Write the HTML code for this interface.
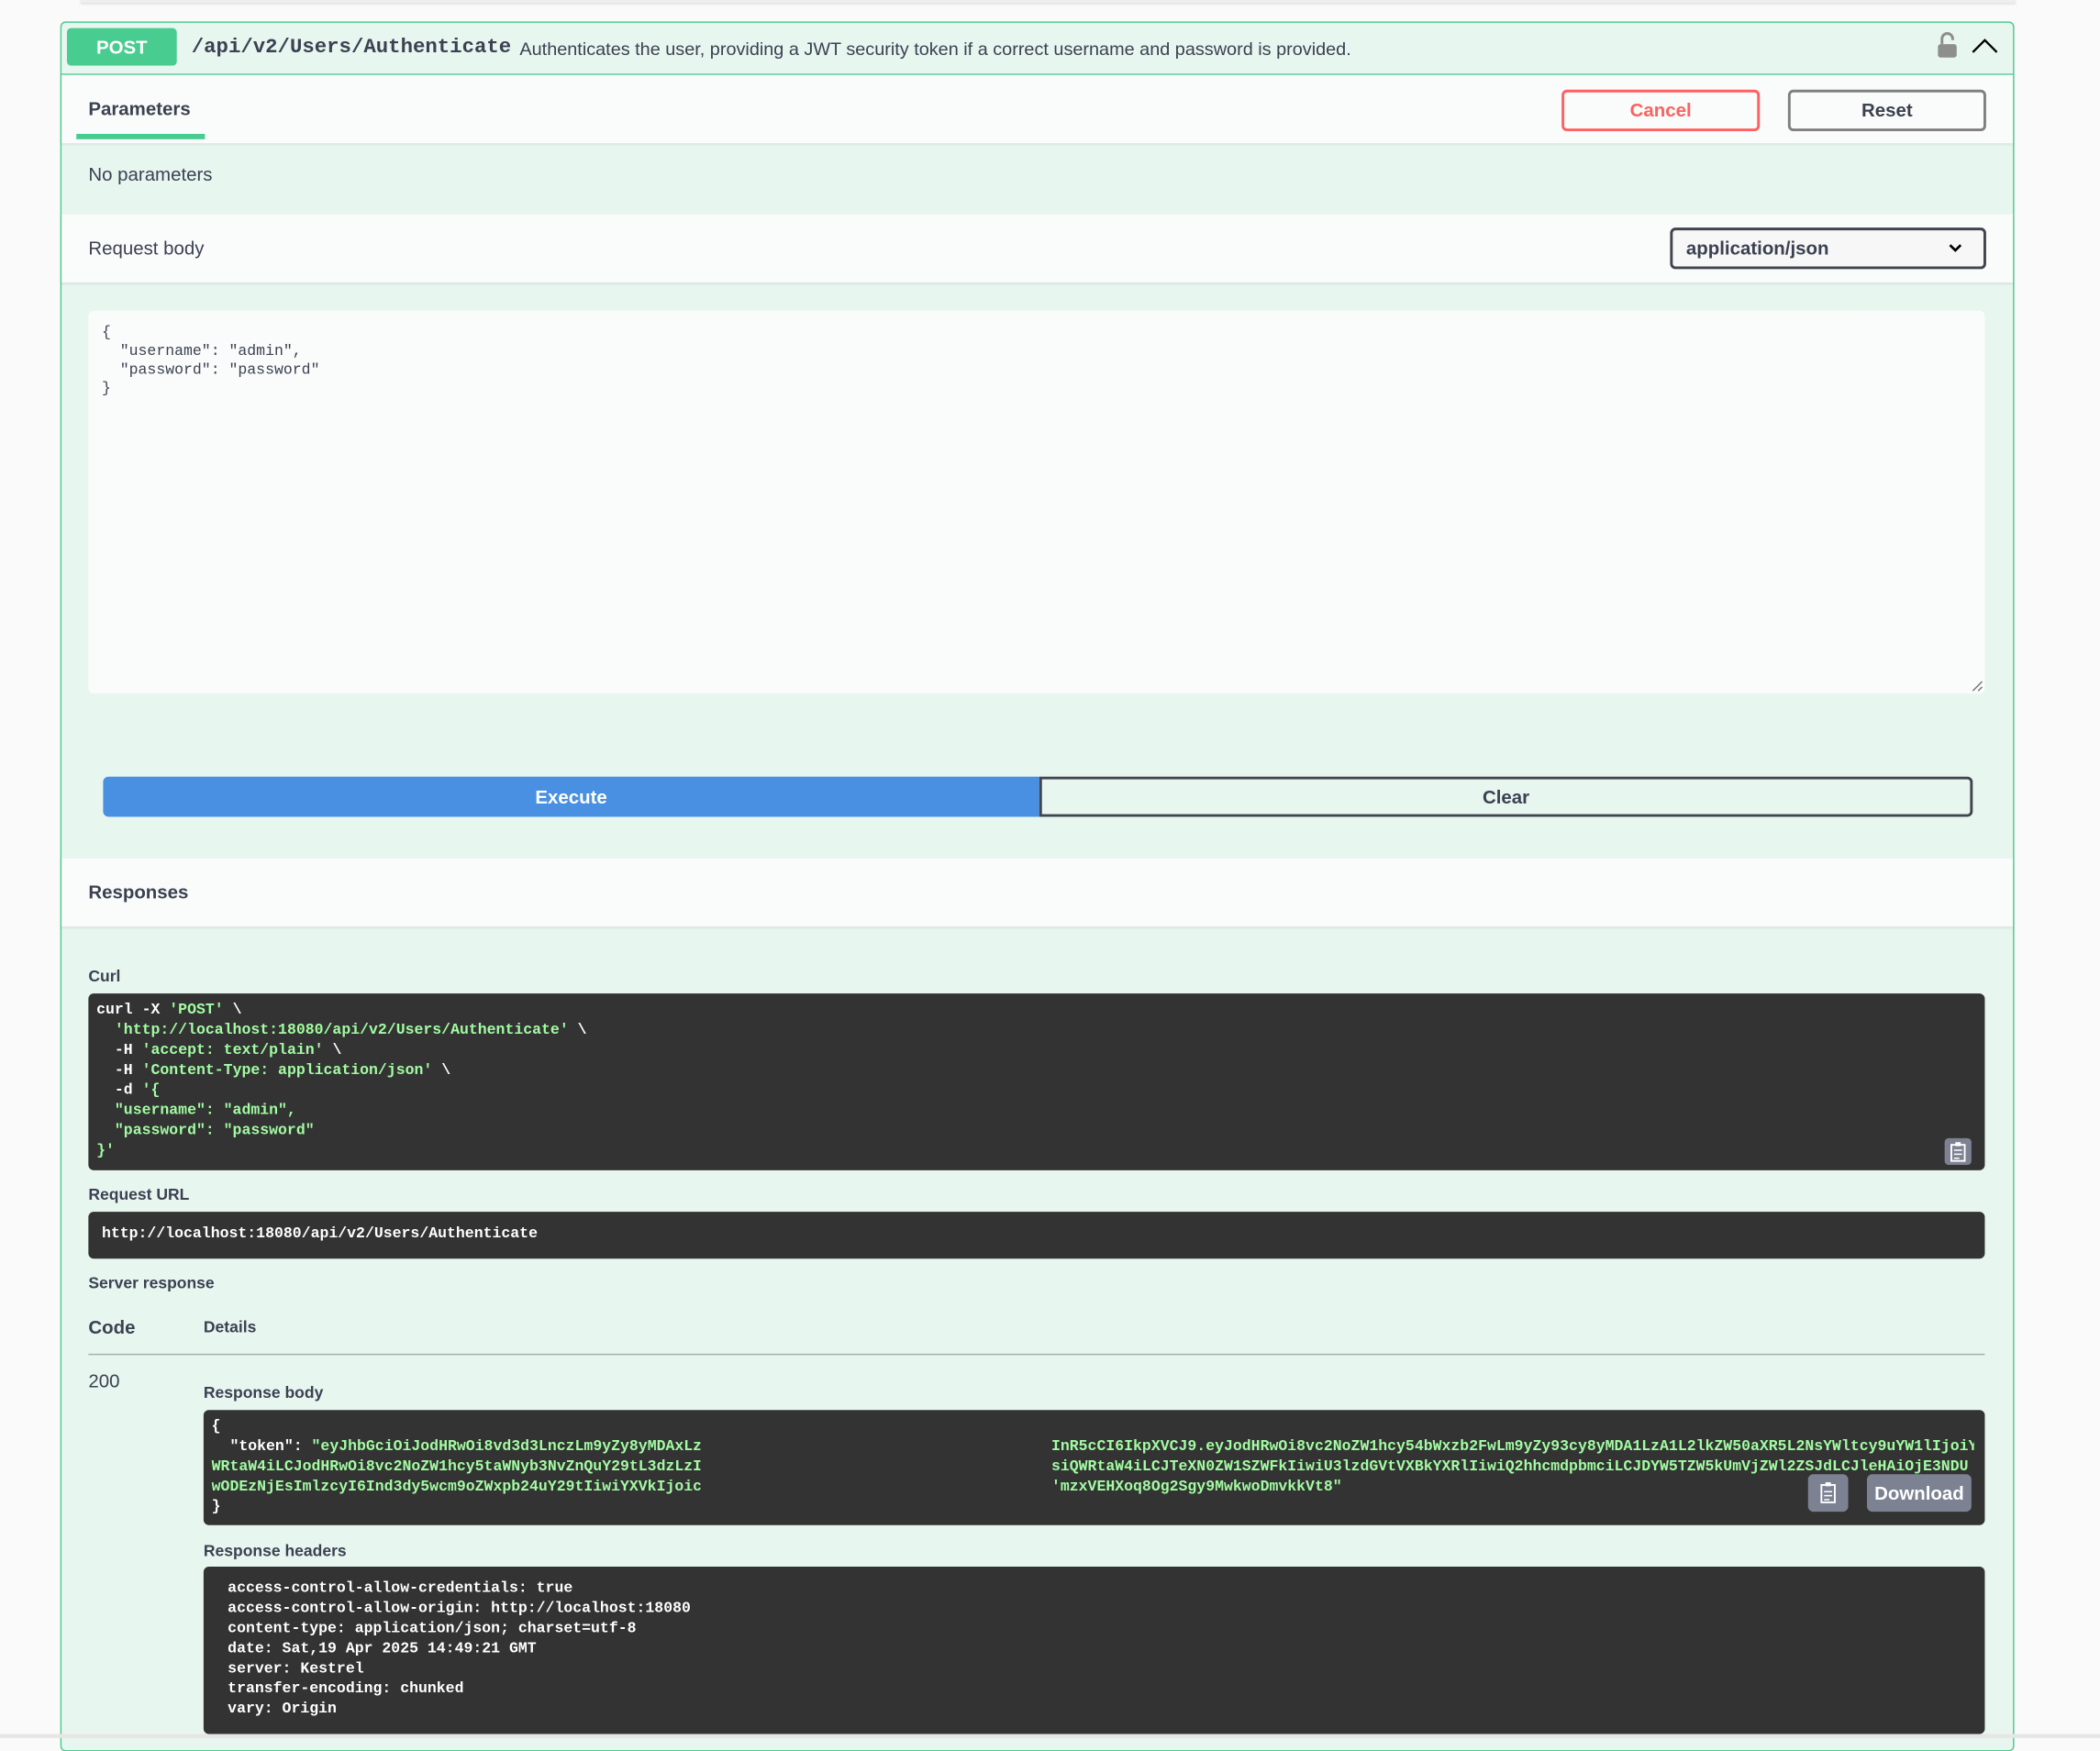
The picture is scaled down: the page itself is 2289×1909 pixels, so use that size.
<!DOCTYPE html>
<html><head><meta charset="utf-8"><style>
html,body{margin:0;padding:0;background:#fafafa;width:2289px;height:1894px;overflow:hidden}
#w{position:absolute;left:0;top:0;width:1568px;height:1298px;transform:scale(1.45982);transform-origin:0 0;font-family:"Liberation Sans",Arial,sans-serif;color:#3b4151}
.a{position:absolute}
.mono{font-family:"Liberation Mono",monospace;font-weight:bold;font-size:11.3px;line-height:15px;white-space:pre}
.g{color:#a2fca2}
.lbl{font-size:12px;font-weight:bold}
</style></head><body><div id="w">
<div class="a" style="left:60px;top:0;width:1445px;height:2px;background:#eee;box-shadow:0 1px 2px rgba(0,0,0,.12)"></div>
<div class="a" style="left:45px;top:16px;width:1457px;height:1290px;border:1px solid #49cc90;border-radius:4px;background:#e8f6f0"></div>
<div class="a" style="left:46px;top:55px;width:1457px;height:1px;background:#49cc90"></div>
<div class="a" style="left:50px;top:21px;width:82px;height:28px;background:#49cc90;border-radius:3px;color:#fff;font-weight:bold;font-size:14px;line-height:28px;text-align:center">POST</div>
<div class="a mono" style="left:143px;top:25px;font-size:15.3px;line-height:20px;color:#3b4151">/api/v2/Users/Authenticate</div>
<div class="a" style="left:388px;top:28px;font-size:13.6px;line-height:17px">Authenticates the user, providing a JWT security token if a correct username and password is provided.</div>
<svg class="a" style="left:1446px;top:24px" width="16" height="20" viewBox="0 0 16 20"><path d="M4 9V5a4 4 0 0 1 8 0v1" fill="none" stroke="#8c8f8d" stroke-width="2"/><rect x="1" y="9" width="14" height="10" rx="2" fill="#8c8f8d"/></svg>
<svg class="a" style="left:1471px;top:27px" width="22" height="14" viewBox="0 0 22 14"><path d="M2 12L11 3L20 12" fill="none" stroke="#000" stroke-width="1.6"/></svg>
<div class="a" style="left:46px;top:56px;width:1457px;height:51px;background:#fafcfb;box-shadow:0 1px 2px rgba(0,0,0,.1)"></div>
<div class="a" style="left:66px;top:73px;font-size:14px;font-weight:bold">Parameters</div>
<div class="a" style="left:57px;top:100px;width:96px;height:4px;background:#49cc90"></div>
<div class="a" style="left:1166px;top:67px;width:144px;height:27px;border:2px solid #ff6060;border-radius:4px;color:#ff6060;font-weight:bold;font-size:14px;line-height:27px;text-align:center">Cancel</div>
<div class="a" style="left:1335px;top:67px;width:144px;height:27px;border:2px solid #808080;border-radius:4px;font-weight:bold;font-size:14px;line-height:27px;text-align:center">Reset</div>
<div class="a" style="left:66px;top:122px;font-size:14px">No parameters</div>
<div class="a" style="left:46px;top:160px;width:1457px;height:51px;background:#fafcfb;box-shadow:0 1px 2px rgba(0,0,0,.1)"></div>
<div class="a" style="left:66px;top:177px;font-size:14px">Request body</div>
<div class="a" style="left:1247px;top:170px;height:27px;border:2px solid #41444e;border-radius:4px;background:#f7f7f7;font-weight:bold;font-size:14px;line-height:27px;padding-left:10px;width:222px">application/json</div>
<svg class="a" style="left:1454px;top:180px" width="12" height="10" viewBox="0 0 12 10"><path d="M2 3L6 7L10 3" fill="none" stroke="#000" stroke-width="1.8"/></svg>
<div class="a" style="left:66px;top:232px;width:1416px;height:286px;background:#fafcfb;border-radius:4px"></div>
<div class="a mono" style="left:76px;top:242px;font-weight:normal;line-height:14px;color:#3b4151">{
  "username": "admin",
  "password": "password"
}</div>
<svg class="a" style="left:1472px;top:508px" width="9" height="9"><path d="M1 8L8 1M5 8L8 5" stroke="#777" stroke-width="1"/></svg>
<div class="a" style="left:77px;top:580px;width:699px;height:30px;background:#4990e2;border-radius:4px 0 0 4px;color:#fff;font-weight:bold;font-size:14px;line-height:30px;text-align:center">Execute</div>
<div class="a" style="left:776px;top:580px;width:693px;height:26px;border:2px solid #41444e;border-radius:0 4px 4px 0;font-weight:bold;font-size:14px;line-height:26px;text-align:center">Clear</div>
<div class="a" style="left:46px;top:641px;width:1457px;height:51px;background:#fafcfb;box-shadow:0 1px 2px rgba(0,0,0,.1)"></div>
<div class="a" style="left:66px;top:658px;font-size:14px;font-weight:bold">Responses</div>
<div class="a lbl" style="left:66px;top:722px">Curl</div>
<div class="a" style="left:66px;top:742px;width:1416px;height:132px;background:#333;border-radius:4px"></div>
<div class="a mono" style="left:72px;top:748px;color:#fff">curl -X <span class="g">'POST'</span> \
  <span class="g">'http://localhost:18080/api/v2/Users/Authenticate'</span> \
  -H <span class="g">'accept: text/plain'</span> \
  -H <span class="g">'Content-Type: application/json'</span> \
  -d <span class="g">'{
  "username": "admin",
  "password": "password"
}'</span></div>
<div class="a" style="left:1452px;top:850px;width:20px;height:20px;background:#7d8293;border-radius:3px"></div>
<svg class="a" style="left:1455px;top:852px" width="14" height="16" viewBox="0 0 14 16"><rect x="2" y="3" width="10" height="12" fill="none" stroke="#fff" stroke-width="1.3"/><rect x="5" y="1" width="4" height="3" fill="#fff"/><path d="M4 7h6M4 10h6M4 13h4" stroke="#fff"/></svg>
<div class="a lbl" style="left:66px;top:885px">Request URL</div>
<div class="a" style="left:66px;top:905px;width:1416px;height:35px;background:#333;border-radius:4px"></div>
<div class="a mono" style="left:76px;top:915px;color:#fff">http://localhost:18080/api/v2/Users/Authenticate</div>
<div class="a lbl" style="left:66px;top:951px">Server response</div>
<div class="a" style="left:66px;top:983px;font-size:14px;font-weight:bold">Code</div>
<div class="a lbl" style="left:152px;top:984px">Details</div>
<div class="a" style="left:66px;top:1011px;width:1416px;height:1px;background:#a8b0ad"></div>
<div class="a" style="left:66px;top:1023px;font-size:14px">200</div>
<div class="a lbl" style="left:152px;top:1033px">Response body</div>
<div class="a" style="left:152px;top:1053px;width:1330px;height:86px;background:#333;border-radius:4px"></div>
<div class="a mono" style="left:158px;top:1059px;color:#fff">{</div>
<div class="a mono" style="left:158px;top:1074px;width:365px;overflow:hidden;color:#fff">  "token": <span class="g">"eyJhbGciOiJodHRwOi8vd3d3LnczLm9yZy8yMDAxLzA0L
</span><span class="g">WRtaW4iLCJodHRwOi8vc2NoZW1hcy5taWNyb3NvZnQuY29tL3dzLzI0
wODEzNjEsImlzcyI6Ind3dy5wcm9oZWxpb24uY29tIiwiYXVkIjoic</span></div>
<div class="a mono g" style="left:785px;top:1074px;width:689px;overflow:hidden">InR5cCI6IkpXVCJ9.eyJodHRwOi8vc2NoZW1hcy54bWxzb2FwLm9yZy93cy8yMDA1LzA1L2lkZW50aXR5L2NsYWltcy9uYW1lIjoiY
siQWRtaW4iLCJTeXN0ZW1SZWFkIiwiU3lzdGVtVXBkYXRlIiwiQ2hhcmdpbmciLCJDYW5TZW5kUmVjZWl2ZSJdLCJleHAiOjE3NDU
'mzxVEHXoq8Og2Sgy9MwkwoDmvkkVt8"</div>
<div class="a mono" style="left:158px;top:1119px;color:#fff">}</div>
<div class="a" style="left:1350px;top:1101px;width:30px;height:28px;background:#7d8293;border-radius:4px"></div>
<svg class="a" style="left:1357px;top:1106px" width="16" height="18" viewBox="0 0 16 18"><rect x="3" y="3" width="10" height="13" fill="none" stroke="#fff" stroke-width="1.3"/><rect x="6" y="1" width="4" height="3" fill="#fff"/><path d="M5 8h6M5 11h6M5 14h4" stroke="#fff"/></svg>
<div class="a" style="left:1394px;top:1101px;width:78px;height:28px;background:#7d8293;border-radius:4px;color:#fff;font-weight:bold;font-size:14px;line-height:28px;text-align:center">Download</div>
<div class="a lbl" style="left:152px;top:1151px">Response headers</div>
<div class="a" style="left:152px;top:1170px;width:1330px;height:125px;background:#333;border-radius:4px"></div>
<div class="a mono" style="left:170px;top:1180px;color:#fff">access-control-allow-credentials: true
access-control-allow-origin: http://localhost:18080
content-type: application/json; charset=utf-8
date: Sat,19 Apr 2025 14:49:21 GMT
server: Kestrel
transfer-encoding: chunked
vary: Origin</div>
<div class="a" style="left:0;top:1295px;width:1568px;height:3px;background:#e6e6e6"></div>
</div></body></html>
